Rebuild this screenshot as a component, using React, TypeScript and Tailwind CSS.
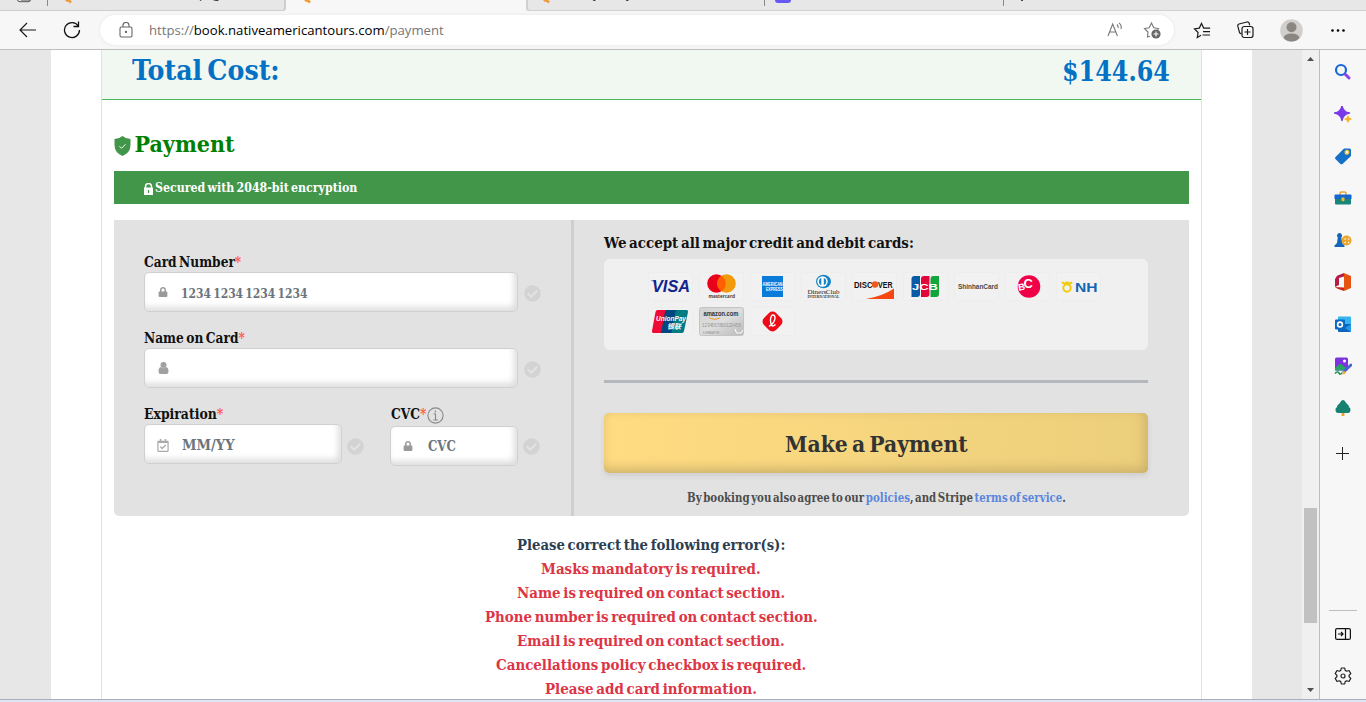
import { useLayoutEffect, useRef, useState } from "react";
import type { ReactNode } from "react";
import { FaLock, FaRegCalendarCheck, FaCheckCircle } from "react-icons/fa";

const slab = "font-['DejaVu_Serif_Condensed','DejaVu_Serif',serif] [font-stretch:condensed] font-bold [word-spacing:-0.13em]";

/* One line of text, condensed so that it fills the width of its box. */
function Fit({ className, children }: { className: string; children: ReactNode }) {
  const outer = useRef<HTMLSpanElement>(null);
  const inner = useRef<HTMLSpanElement>(null);
  const [scale, setScale] = useState(1);
  useLayoutEffect(() => {
    if (outer.current && inner.current) setScale(outer.current.offsetWidth / inner.current.offsetWidth);
  }, []);
  return (
    <span ref={outer} className={`block shrink-0 whitespace-nowrap ${className}`}>
      <span ref={inner} className="inline-block origin-left" style={{ transform: `scaleX(${scale})` }}>
        {children}
      </span>
    </span>
  );
}

const Star = () => <span className="text-[#ff5a4f]">*</span>;
const Paw = () => (
  <svg className="block h-[4px] w-[8px]" viewBox="0 0 8 4">
    <path d="M1 0h5l2 1.500L6 3.500 4.500 1.800 3 2z" fill="#f19a36" />
  </svg>
);

function Tabs() {
  return (
    <div className="flex h-[11px] shrink-0 items-start overflow-hidden bg-[#e7e7e7]">
      <div className="flex h-[11px] w-[286px] items-start rounded-br-[4px] border-b border-r-2 border-[#cdcdcd]">
        <svg className="ml-[17px] block h-[3px] w-[15px]" viewBox="0 0 15 3">
          <path d="M.5 0Q.5 1.700 3 1.700h8q2.500 0 2.500-1.700M4 0h9" fill="none" stroke="#555" />
        </svg>
        <div className="ml-[15px] h-[6px] w-px bg-[#888]" />
        <div className="ml-[16px]"><Paw /></div>
        <span className="ml-[127px] -mt-[14px] font-['Open_Sans',sans-serif] text-[12px] leading-[16px] text-[#333]">page(</span>
      </div>
      <div className="h-[11px] w-[240px] bg-[#f7f7f7] pl-[17px]"><Paw /></div>
      <div className="flex h-[11px] flex-1 items-start rounded-bl-[4px] border-b border-l-2 border-[#d0d0d0] pl-[14px]">
        <Paw />
        <span className="ml-[43px] -mt-[14px] w-[176px] font-['Open_Sans',sans-serif] text-[12px] leading-[16px] text-[#333]">y<span className="ml-[27px]">y</span></span>
        <div className="-ml-[5px] h-[6px] w-px bg-[#888]" />
        <div className="ml-[10px] h-[3px] w-[16px] rounded-b-[3px] bg-[#6558f5]" />
        <div className="ml-[212px] h-[6px] w-px bg-[#888]" />
        <div className="ml-[17px] h-[1px] w-[2px] bg-[#444]" />
      </div>
    </div>
  );
}

function Toolbar() {
  return (
    <div className="flex h-[39px] shrink-0 items-center border-b border-[#bdbdbd] bg-[#f7f7f7]">
      <svg className="ml-[19px] block h-[16px] w-[18px]" viewBox="0 0 18 16" fill="none" stroke="#1b1b1b" strokeWidth="1.200">
        <path d="M17 8H1M8 1 1 8l7 7" />
      </svg>
      <svg className="ml-[26px] block h-[18px] w-[18px]" viewBox="0 0 18 18" fill="none" stroke="#111" strokeWidth="1.300">
        <path d="M15.300 5A7.500 7.500 0 1 0 16.500 9M15.500.5V5.500h-5" />
      </svg>
      <div className="ml-[19px] flex h-[30px] w-[1074px] items-center rounded-full bg-white shadow-[0_0_3px_#e2e2e2]">
        <svg className="ml-[19px] block h-[16px] w-[14px]" viewBox="0 0 14 16" fill="none" stroke="#666" strokeWidth="1.100">
          <rect x="1" y="5" width="12" height="10" rx="1.500" />
          <path d="M4 5V3.500a3 3 0 0 1 6 0V5" />
          <circle cx="7" cy="10" r=".6" fill="#555" />
        </svg>
        <Fit className="ml-[16px] w-[295px] font-['Open_Sans',sans-serif] text-[13.500px] leading-[30px] text-[#767676]">
          https://<span className="text-black">book.nativeamericantours.com</span>/payment
        </Fit>
        <svg className="ml-[663px] block h-[16px] w-[17px]" viewBox="0 0 17 16" fill="none" stroke="#777" strokeWidth="1.100">
          <path d="M1 14 5.700 2l4.700 12M2.600 10h6.200M10 2.500q1.500 1.500 1 3.500M12 .8q3 2.500 2 6.200" />
        </svg>
        <svg className="ml-[19px] block h-[18px] w-[18px]" viewBox="0 0 18 18" fill="none" stroke="#777" strokeWidth="1.100">
          <path d="M7 15.200 4.500 16l.5-5L1.500 7.500l4.700-.8L8.500 2l2.300 4.700 4.700.8-1 1" />
          <circle cx="13" cy="13" r="4.600" fill="#666" stroke="none" />
          <path d="M10.500 13h5M13 10.500v5" stroke="#fff" />
        </svg>
      </div>
      <svg className="ml-[19px] block h-[17px] w-[18px]" viewBox="0 0 18 17" fill="none" stroke="#1b1b1b" strokeWidth="1.200">
        <path d="M8 13.200 4.300 15.500l.8-5L1.500 6.800l4.800-.7L8.500 1.500l2.200 4.600h6.500M10 9.700h7M9.500 13h7.500" />
      </svg>
      <svg className="ml-[26px] block h-[18px] w-[17px]" viewBox="0 0 17 18" fill="none" stroke="#1b1b1b" strokeWidth="1.200">
        <path d="M4.500 13 2.600 11.800.8 5.200q-.3-1.700 1.200-2.200L10 1q1.600-.2 2.200 1.200l.5 2.200" />
        <rect x="5" y="5.500" width="11" height="11" rx="2.200" />
        <path d="M7.500 11h6M10.500 8v6" />
      </svg>
      <svg className="ml-[26px] block h-[23px] w-[23px]" viewBox="0 0 23 23">
        <circle cx="11.500" cy="11.500" r="11.300" fill="#d1cfcc" />
        <circle cx="11.500" cy="8.300" r="5" fill="#8b8682" />
        <path d="M3.500 19q1-4.500 8-4.500t8 4.500q-3.500 3.500-8 3.500t-8-3.500" fill="#8b8682" />
      </svg>
      <svg className="ml-[28px] block h-[3px] w-[14px]" viewBox="0 0 14 3">
        <circle cx="1.500" cy="1.500" r="1.300" /><circle cx="7" cy="1.500" r="1.300" /><circle cx="12.500" cy="1.500" r="1.300" />
      </svg>
    </div>
  );
}

function Check({ className }: { className: string }) {
  return <FaCheckCircle className={`size-[17px] shrink-0 text-[#d3d3d3] ${className}`} />;
}

const inputBox =
  "flex h-[40px] shrink-0 items-center rounded-[5px] border border-[#d0d0d0] bg-white shadow-[inset_-3px_-4px_6px_#dedede]";

function CardForm() {
  return (
    <div className={`h-[296px] w-[457px] pl-[30px] pt-[32px] text-[14px] leading-[20px] text-[#111] ${slab}`}>
      <Fit className="w-[97px]">Card Number<Star /></Fit>
      <div className="flex items-center">
        <div className={`${inputBox} w-[374px]`}>
          <FaLock className="ml-[13px] size-[10px] text-[#999]" />
          <Fit className="ml-[13px] w-[126px] pt-px text-[13.500px] text-[#6c757d]">1234 1234 1234 1234</Fit>
        </div>
        <Check className="ml-[6px] mt-[2px]" />
      </div>
      <Fit className="mt-[16px] w-[101px]">Name on Card<Star /></Fit>
      <div className="flex items-center">
        <div className={`${inputBox} w-[374px]`}>
          <svg className="ml-[13px] block h-[12px] w-[11px]" viewBox="0 0 11 12" fill="#a0a0a0">
            <circle cx="5.500" cy="3" r="3" />
            <path d="M2.800 5q2.700 2.500 5.400 0Q10.500 5.500 10.500 9.500q0 2.500-2 2.500h-6q-2 0-2-2.500Q.5 5.500 2.800 5" />
          </svg>
        </div>
        <Check className="ml-[6px] mt-[2px]" />
      </div>
      <div className="mt-[16px] flex items-start">
        <div className="w-[198px]">
          <Fit className="w-[79px]">Expiration<Star /></Fit>
          <div className={`${inputBox} w-[198px]`}>
            <FaRegCalendarCheck className="ml-[11px] mt-[2px] h-[13px] w-[14px] text-[#aaa]" />
            <Fit className="ml-[12px] w-[52px] pt-[2px] text-[#6c757d]">MM/YY</Fit>
          </div>
        </div>
        <Check className="ml-[5px] mt-[34px]" />
        <div className="ml-[26px] w-[128px]">
          <div className="flex h-[22px] items-start">
            <Fit className="ml-px w-[35px]">CVC<Star /></Fit>
            <svg className="ml-px mt-[3px] block size-[17px]" viewBox="0 0 17 17" fill="none" stroke="#888" strokeWidth="1.100">
              <circle cx="8.500" cy="8.500" r="7.600" />
              <path d="M6.500 7h2v6M6.300 13h4.600M8.300 3.600v1.800" />
            </svg>
          </div>
          <div className={`${inputBox} w-[128px]`}>
            <FaLock className="ml-[12px] size-[10px] text-[#999]" />
            <Fit className="ml-[15px] w-[28px] text-[#6c757d]">CVC</Fit>
          </div>
        </div>
        <Check className="ml-[5px] mt-[34px]" />
      </div>
    </div>
  );
}

const sans = "Liberation Sans, Arial, sans-serif";
const brands: ReactNode[] = [
  <>
    <text x="4" y="20" fontFamily={sans} fontWeight="700" fontStyle="italic" fontSize="16" textLength="38" lengthAdjust="spacingAndGlyphs" fill="#12258c">VISA</text>
    <path d="M2.500 8.500h5l1 2z" fill="#12258c" />
  </>,
  <>
    <circle cx="17.500" cy="11.500" r="9.300" fill="#eb001b" />
    <circle cx="27.500" cy="11.500" r="9.300" fill="#f39a0c" />
    <path d="M22.500 3.700a9.300 9.300 0 0 1 0 15.600 9.300 9.300 0 0 1 0-15.600" fill="#ff5f00" />
    <text x="9.500" y="25.500" fontFamily="Open Sans, sans-serif" fontWeight="600" fontSize="5.500" textLength="26.500" lengthAdjust="spacingAndGlyphs" fill="#333">mastercard</text>
  </>,
  <>
    <rect x="12" y="4" width="21" height="21" fill="#0a7bd9" />
    <text x="12.500" y="14" fontFamily={sans} fontWeight="700" fontSize="4.500" textLength="20" lengthAdjust="spacingAndGlyphs" fill="#fff">AMERICAN</text>
    <text x="16" y="18.500" fontFamily={sans} fontWeight="700" fontSize="4.500" textLength="16.500" lengthAdjust="spacingAndGlyphs" fill="#fff">EXPRESS</text>
  </>,
  <>
    <ellipse cx="22.500" cy="9.500" rx="7.500" ry="6.700" fill="#1584c7" />
    <circle cx="21.500" cy="9.500" r="5.200" fill="#fff" />
    <path d="M20.300 5.800a4 4 0 0 0 0 7.400zM22.800 5.800a4 4 0 0 1 0 7.400z" fill="#1584c7" />
    <text x="6.500" y="22" fontFamily="Liberation Serif, serif" fontWeight="400" fontSize="7" textLength="32" lengthAdjust="spacingAndGlyphs" fill="#222">Diners Club</text>
    <text x="6.500" y="26" fontFamily="Liberation Serif, serif" fontWeight="700" fontSize="4" textLength="32" lengthAdjust="spacingAndGlyphs" fill="#333">INTERNATIONAL</text>
  </>,
  <>
    <text x="2" y="15.500" fontFamily={sans} fontWeight="700" fontSize="8.500" textLength="18.500" lengthAdjust="spacingAndGlyphs" fill="#111">DISC</text>
    <circle cx="23" cy="12.500" r="3.200" fill="#f0591e" />
    <text x="26" y="15.500" fontFamily={sans} fontWeight="700" fontSize="8.500" textLength="14.500" lengthAdjust="spacingAndGlyphs" fill="#111">VER</text>
    <path d="M14 27Q31 24 42 16.500V27z" fill="#f5470f" />
  </>,
  <>
    <path d="M11.500 4H17v18q0 3-3 3H8.500V7q0-3 3-3" fill="#0b5aa8" />
    <path d="M21 4h5.500v18q0 3-3 3H18V7q0-3 3-3" fill="#e0063c" />
    <path d="M30.500 4h5.500v18q0 3-3 3h-5.500V7q0-3 3-3" fill="#12a53c" />
    <text x="9" y="17.600" fontFamily={sans} fontWeight="700" fontSize="9" textLength="26" lengthAdjust="spacingAndGlyphs" fill="#fff">JCB</text>
  </>,
  <text x="4" y="17" fontFamily={sans} fontWeight="700" fontSize="6.500" textLength="40" lengthAdjust="spacingAndGlyphs" fill="#4a4a4a">ShinhanCard</text>,
  <>
    <circle cx="24" cy="14.500" r="11.300" fill="#f00047" />
    <text x="13" y="18.500" fontFamily={sans} fontWeight="700" fontSize="9.500" fill="#fff" transform="rotate(-10 15 15)">B</text>
    <text x="18.500" y="15.500" fontFamily={sans} fontWeight="700" fontSize="13" fill="#fff">C</text>
  </>,
  <>
    <circle cx="11" cy="16" r="3.700" fill="none" stroke="#f3c90b" strokeWidth="2" />
    <path d="m5.800 10.500 4 1.500h2.400l4-1.500M9.500 10.500h3" fill="none" stroke="#f3c90b" strokeWidth="2" />
    <text x="19" y="19.500" fontFamily={sans} fontWeight="700" fontSize="12.500" textLength="22.500" lengthAdjust="spacingAndGlyphs" fill="#1266b5">NH</text>
  </>,
  <>
    <path d="M9.500 3h10l-5 23H5.500q-2 0-1.500-2L7.500 5q.5-2 2-2" fill="#ee0936" />
    <path d="M18.500 3h12l-5 23H13l4-21q.5-2 1.500-2" fill="#00467f" />
    <path d="M29 3h9.500q2 0 1.500 2l-4 19q-.5 2-2 2H23.500l4-21q.5-2 1.500-2" fill="#007b84" />
    <text x="8" y="14" fontFamily={sans} fontWeight="700" fontStyle="italic" fontSize="7" textLength="30" lengthAdjust="spacingAndGlyphs" fill="#fff">UnionPay</text>
    <text x="19" y="22" fontFamily="Noto Sans CJK SC, sans-serif" fontWeight="700" fontStyle="italic" fontSize="7" textLength="14" lengthAdjust="spacingAndGlyphs" fill="#fff">银联</text>
  </>,
  <>
    <defs>
      <linearGradient id="silver" x1="0" y1="0" x2="1" y2="1">
        <stop offset="0" stopColor="#d2d2d2" /><stop offset=".5" stopColor="#dedede" /><stop offset="1" stopColor="#b9b9b9" />
      </linearGradient>
    </defs>
    <rect x=".5" y=".5" width="44" height="28" rx="2" fill="url(#silver)" stroke="#c4c4c4" />
    <text x="4.500" y="9" fontFamily={sans} fontWeight="700" fontSize="7" textLength="35" lengthAdjust="spacingAndGlyphs" fill="#333">amazon.com</text>
    <path d="M10 10.500q5 3.300 11 .4" fill="none" stroke="#f49a20" />
    <text x="3" y="19.500" fontFamily={sans} fontWeight="400" fontSize="4.500" textLength="39" lengthAdjust="spacingAndGlyphs" fill="#999">1234 5678 9012 3456</text>
    <text x="3" y="27" fontFamily={sans} fontWeight="400" fontSize="2.800" textLength="17" fill="#888">JOHN SMITH</text>
    <path d="m36 22 1.500 4h5l1-3" fill="none" stroke="#fff" />
  </>,
  <>
    <rect x="14" y="6" width="17" height="17" rx="5" fill="#ed0b18" transform="rotate(45 22.500 14.500)" />
    <path d="M19 19.500q6-4 6-8.500 0-3-2-3t-2.500 4.500q0 6 2 6.500 1.500 0 3-1.500" fill="none" stroke="#fff" strokeWidth="1.400" />
  </>,
];

function Checkout() {
  return (
    <div className={`h-[296px] flex-1 pl-[30px] pr-[41px] pt-[12px] ${slab}`}>
      <Fit className="w-[310px] text-[15px] leading-[22px] text-[#111]">We accept all major credit and debit cards:</Fit>
      <div className="mt-[5px] flex h-[91px] flex-wrap content-start gap-x-[6px] gap-y-[6px] rounded-[6px] bg-[#f0f0f0] pl-[44px] pr-[30px] pt-[13px]">
        {brands.map((b, i) => (
          <svg key={i} className="block h-[29px] w-[45px]" viewBox="0 0 45 29">
            <rect x=".5" y=".5" width="44" height="28" rx="2" fill="#f1f1f1" stroke="#ededed" />
            {b}
          </svg>
        ))}
      </div>
      <div className="mt-[30px] h-[3px] bg-[#b4b7bd]" />
      <button className="mt-[30px] flex h-[60px] w-full items-center justify-center rounded-[5px] bg-gradient-to-r from-[#ffdc82] to-[#eccf7b] text-[23px] leading-[60px] text-[#333] shadow-[inset_-3px_-4px_12px_#cbb06a,0_3px_5px_#cfcfcf] [word-spacing:-0.13em]">
        <Fit className="ml-px w-[183px] pt-px">Make a Payment</Fit>
      </button>
      <div className="mt-[15px] flex justify-center">
        <Fit className="ml-px w-[379px] text-[12px] leading-[20px] text-[#4d4d4d]">
          By booking you also agree to our <span className="text-[#5a86dc]">policies</span>, and Stripe <span className="text-[#5a86dc]">terms of service</span>.
        </Fit>
      </div>
    </div>
  );
}

function Page() {
  return (
    <main className="flex w-[1302px] justify-center overflow-hidden bg-[#e7e7e7]">
      <div className="w-[1201px] bg-white pl-[50px]">
        <div className="h-full w-[1101px] border-x border-[#dee2e6]">
          <div className={`flex h-[50px] items-start justify-between border-b border-[#4db45a] bg-[#f1f8f2] pl-[30px] pr-[31px] pt-[1px] text-[27px] leading-[40px] text-[#0371c4] ${slab}`}>
            <Fit className="w-[148px]">Total Cost:</Fit>
            <Fit className="w-[108px] pt-px">$144.64</Fit>
          </div>
          <div className="px-[12px]">
            <div className="mt-[29px] flex h-[30px] items-center">
              <svg className="mt-[3px] block h-[20px] w-[17px]" viewBox="0 0 17 20">
                <path d="M8.500 0Q12 3 16.500 3v6q0 7.500-8 11Q.5 16.500.5 9V3q4.500 0 8-3" fill="#429649" />
                <path d="m5.500 10.300 2 2 4-4" fill="none" stroke="#fff" />
              </svg>
              <Fit className={`ml-[4px] w-[100px] text-[23px] leading-[30px] text-[#008000] ${slab}`}>Payment</Fit>
            </div>
            <div className="mt-[12px] flex h-[33px] items-center bg-[#429649] pl-[30px]">
              <svg className="mt-[3px] block h-[12px] w-[9px]" viewBox="0 0 9 12">
                <path d="M1.500 5V3.500a3 3 0 0 1 6 0V5" fill="none" stroke="#fff" strokeWidth="1.500" />
                <rect y="4.500" width="9" height="7.500" rx=".5" fill="#fff" />
                <path d="M4.500 7v3" stroke="#429649" strokeWidth="1.200" />
              </svg>
              <Fit className={`ml-[2px] w-[202px] text-[12.500px] leading-[33px] text-white ${slab}`}>Secured with 2048-bit encryption</Fit>
            </div>
            <div className="mt-[16px] flex h-[296px] rounded-b-[5px] bg-[#e2e2e2]">
              <CardForm />
              <div className="w-[3px] bg-[#cfcfcf]" />
              <Checkout />
            </div>
            <div className={`mt-[17px] flex flex-col items-center text-[15.500px] leading-[24px] text-[#dc3545] ${slab}`}>
              <Fit className="w-[268px] text-[#2c3e50]">Please correct the following error(s):</Fit>
              <Fit className="w-[220px]">Masks mandatory is required.</Fit>
              <Fit className="w-[268px]">Name is required on contact section.</Fit>
              <Fit className="w-[333px]">Phone number is required on contact section.</Fit>
              <Fit className="w-[268px]">Email is required on contact section.</Fit>
              <Fit className="w-[310px]">Cancellations policy checkbox is required.</Fit>
              <Fit className="w-[212px]">Please add card information.</Fit>
            </div>
          </div>
        </div>
      </div>
    </main>
  );
}

const sideIcons: ReactNode[] = [
  <><circle cx="7" cy="7" r="5" fill="none" stroke="#1767d8" strokeWidth="2.200" /><path d="m11.500 11.500 3.500 3.500" stroke="#8a43ea" strokeWidth="3" strokeLinecap="round" /></>,
  <><path d="M8 1q1 6 7.500 7Q9 9 8 15.500 7 9 .5 8 7 7 8 1" fill="#7b38e8" stroke="#7b38e8" strokeWidth="1.500" strokeLinejoin="round" /><path d="M14 10.500q.5 3 3.500 3.500-3 .5-3.500 3.500-.5-3-3.500-3.500 3-.5 3.500-3.500" fill="#f6b21b" stroke="#f6b21b" strokeWidth=".6" /></>,
  <><path d="M10 1.500h5.500q1.500 0 1.500 1.500v6L8.500 17q-1.200.8-2.300-.3L1.400 12Q.5 11 1.500 10z" fill="#1470c8" /><circle cx="13" cy="5.300" r="1.900" fill="#fff" stroke="#f4bc35" strokeWidth="1.300" /></>,
  <><path d="M6 6V4.500Q6 3 7.500 3h3Q12 3 12 4.500V6" fill="none" stroke="#eaa52a" strokeWidth="1.500" /><path d="M1 9h16v5.500q0 1-1 1H2q-1 0-1-1z" fill="#178579" /><path d="M1.500 5.500h15q1 0 1 1V10h-17V6.500q0-1 1-1" fill="#1467cf" /><path d="M7.500 8.500h3v3l-1.500 1-1.500-1z" fill="#f5b926" /></>,
  <><circle cx="12.500" cy="9.500" r="5" fill="#eaa52a" /><path d="M11 8h.1M14.500 8h.1M11 11.500h.1M14.500 11.500h.1" stroke="#fff" strokeWidth="1.500" strokeLinecap="round" /><path d="M5.500 2a2.600 2.600 0 0 1 1.800 4.500L8 12l2.500 2.500V16H.5v-1.500L3 12l.8-5.500A2.600 2.600 0 0 1 5.500 2" fill="#1767b8" /></>,
  <><path d="M10 0 3 2.800 1 6v8l4-2V5l5-1.500z" fill="#b51d48" /><path d="m10 0 7 3v12l-7 3z" fill="#e55411" /><path d="m1 14 9 .5V18L3.500 15.800z" fill="#c8291f" /></>,
  <><rect x="4" y="1.500" width="13" height="9" rx="1" fill="#36b5ed" /><path d="M4 9h13v7q0 1-1 1H5q-1 0-1-1z" fill="#0c65ba" /><path d="m17 9-6 4 6 4z" fill="#2499e5" /><rect x="1" y="4.500" width="10" height="10" rx="1" fill="#0969c3" /><circle cx="6" cy="9.500" r="2.400" fill="none" stroke="#fff" strokeWidth="1.600" /></>,
  <><rect x="1" y=".5" width="13" height="13" rx="1.500" fill="#7d33dd" /><circle cx="10.500" cy="4" r="1.500" fill="#fff" /><path d="m1 11 4-3.500q1.500-1 3 0l4 3.500v2.500H1z" fill="#26a566" /><path d="M1 16.500q2.500-3 4-.5t3-.5" fill="none" stroke="#179451" strokeWidth="1.500" /><path d="M10 14.500 17 8" stroke="#4963d7" strokeWidth="3" strokeLinecap="round" /><path d="m8 17.500 1.500-4 2.500 2q-1 2-4 2" fill="#f9aa22" /></>,
  <><path d="M9 13v4" stroke="#eda42b" strokeWidth="2.800" /><path d="M9 1q1.500 0 2.500 2l1.500 2q2 1 2 3 2 1 1.500 3.500T14 14H4q-2 0-2.500-2.500T3 8q0-2 2-3l1.500-2Q7.500 1 9 1" fill="#168071" /></>,
];

function Side() {
  return (
    <aside className="flex w-[47px] flex-col items-center border-l border-[#bdbdbd] bg-[#f7f7f7] pt-[13px]">
      <div className="flex flex-col gap-[24px]">
        {sideIcons.map((icon, i) => (
          <svg key={i} className="block size-[18px]" viewBox="0 0 18 18">{icon}</svg>
        ))}
      </div>
      <svg className="mr-px mt-[30px] block size-[13px]" viewBox="0 0 13 13" stroke="#222"><path d="M0 6.500h13M6.500 0v13" /></svg>
      <div className="mt-[150px] h-px w-[28px] bg-[#bdbdbd]" />
      <svg className="mt-[17px] block h-[12px] w-[16px]" viewBox="0 0 16 12" fill="none" stroke="#111" strokeWidth="1.200">
        <rect x=".6" y=".6" width="14.800" height="10.800" rx="1.500" /><path d="M10.500 1v10M3 6h5M6 4l2 2-2 2" />
      </svg>
      <svg className="mt-[27px] block size-[18px]" viewBox="0 0 18 18" fill="none" stroke="#222" strokeWidth="1.200">
        <path d="m7.300 1-.5 2.400-1.500.8L3 3.500 1.200 6.600l1.700 1.600v1.600l-1.700 1.600L3 14.500l2.300-.7 1.500.8.500 2.400h3.400l.5-2.400 1.500-.8 2.300.7 1.800-3.100-1.700-1.600V8.200l1.700-1.600L15 3.500l-2.300.7-1.500-.8-.5-2.400z" strokeLinejoin="round" /><circle cx="9" cy="9" r="2" />
      </svg>
    </aside>
  );
}

export default function App() {
  return (
    <div className="flex h-[702px] w-[1366px] flex-col overflow-hidden">
      <Tabs />
      <Toolbar />
      <div className="flex h-[649px]">
        <Page />
        <div className="flex w-[17px] flex-col items-center bg-[#f0f0f0] pt-[7px]">
          <svg className="block h-[4px] w-[7px]" viewBox="0 0 7 4"><path d="M0 4 3.500 0 7 4" fill="#505050" /></svg>
          <div className="mt-[447px] h-[115px] w-[13px] bg-[#c1c1c1]" />
          <svg className="mt-[65px] block h-[4px] w-[7px]" viewBox="0 0 7 4"><path d="M0 0h7L3.500 4" fill="#505050" /></svg>
        </div>
        <Side />
      </div>
      <div className="h-[3px] border-t border-[#a9afba] bg-[#dce6f4]" />
    </div>
  );
}
